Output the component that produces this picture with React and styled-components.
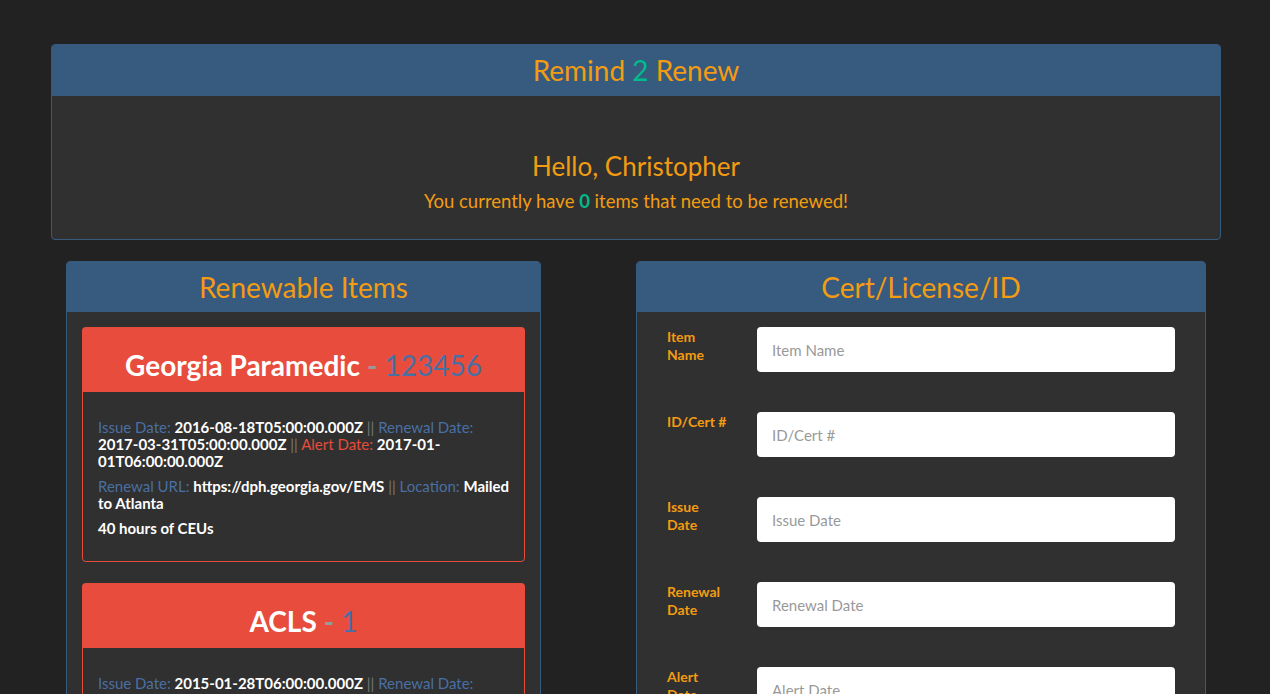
import React from "react";
import styled, { createGlobalStyle } from "styled-components";

const GlobalStyle = createGlobalStyle`
  html, body { margin: 0; padding: 0; background: #222222; }
  body { font-family: Lato, "Liberation Sans", sans-serif; color: #ffffff; }
  * { box-sizing: border-box; }
`;

const Page = styled.div`
  width: 1170px;
  margin: 0 0 0 51px;
  padding-top: 44px;
  padding-bottom: 40px;
`;

const Panel = styled.section`
  background: #303030;
  border: 1px solid #375a7f;
  border-radius: 4px;
  overflow: hidden;
  margin-bottom: ${(p) => p.$mb || "21px"};
`;

const PanelHead = styled.header`
  background: #375a7f;
  height: ${(p) => p.$h || "51px"};
  margin: -1px -1px 0;
  display: flex;
  align-items: center;
  justify-content: center;
`;

const PanelTitle = styled.h1`
  margin: 0;
  font-family: Lato, sans-serif;
  font-weight: 400;
  font-size: ${(p) => p.$size || "28px"};
  color: #f39c12;
  line-height: 1;
`;

const Teal = styled.span`
  color: #00bc8c;
  font-weight: ${(p) => (p.$bold ? 700 : "inherit")};
`;

const Welcome = styled.div`
  padding: 56px 15px 28px;
  text-align: center;
  color: #f39c12;
`;

const Hello = styled.h2`
  margin: 0;
  font-size: 26px;
  font-weight: 400;
  line-height: 29px;
`;

const Subline = styled.p`
  margin: 10px 0 0;
  font-size: 18.5px;
  line-height: 20px;
`;

const Row = styled.div`
  display: flex;
  justify-content: space-between;
  align-items: flex-start;
  padding: 0 15px;
`;

const Column = styled.div`
  width: ${(p) => p.$w};
`;

const PanelBody = styled.div`
  padding: 15px;
`;

const Card = styled.article`
  border-radius: 4px;
  overflow: hidden;
  margin-bottom: 21px;
`;

const CardHead = styled.header`
  background: #e74c3c;
  height: 65px;
  padding-top: 11px;
  display: flex;
  align-items: center;
  justify-content: center;
  font-size: 28px;
  line-height: 1;
`;

const CardName = styled.span`
  font-weight: 700;
  color: #ffffff;
`;

const Dash = styled.span`
  font-weight: 700;
  color: #999999;
  margin: 0 7px;
`;

const CardNum = styled.span`
  color: #4a6fa3;
`;

const CardBody = styled.div`
  border: 1px solid #e74c3c;
  border-top: none;
  border-radius: 0 0 4px 4px;
  padding: 27px 11px 24px 15px;
  font-size: 15px;
  line-height: 17px;
`;

const Para = styled.p`
  margin: 0 0 8px;
  &:last-child { margin-bottom: 0; }
`;

const Lbl = styled.span`
  color: ${(p) => (p.$alert ? "#e74c3c" : "#4a6fa3")};
`;

const Val = styled.span`
  color: #ffffff;
  font-weight: 700;
`;

const Sep = styled.span`
  color: #777777;
`;

const FormBody = styled.div`
  padding: 15px 30px 15px 30px;
  display: flex;
  flex-direction: column;
  gap: 40px;
`;

const FormRow = styled.div`
  display: flex;
  align-items: flex-start;
`;

const FieldLabel = styled.label`
  width: 62px;
  margin-right: 28px;
  padding-top: 1px;
  font-size: 14px;
  font-weight: 700;
  line-height: 18px;
  color: #f39c12;
`;

const Input = styled.input`
  flex: 1;
  height: 45px;
  border: none;
  border-radius: 4px;
  background: #ffffff;
  padding: 0 15px;
  font-family: Lato, sans-serif;
  font-size: 15px;
  color: #333;
  outline: none;
  &::placeholder { color: #999999; }
`;

const items = [
  {
    name: "Georgia Paramedic",
    num: "123456",
    issue: "2016-08-18T05:00:00.000Z",
    renewal: "2017-03-31T05:00:00.000Z",
    alert: "2017-01-01T06:00:00.000Z",
    url: "https://dph.georgia.gov/EMS",
    location: "Mailed to Atlanta",
    notes: "40 hours of CEUs",
  },
  {
    name: "ACLS",
    num: "1",
    issue: "2015-01-28T06:00:00.000Z",
    renewal: "2017-01-28T06:00:00.000Z",
    alert: "2016-12-28T06:00:00.000Z",
    url: "https://www.heart.org",
    location: "Training Center",
    notes: "Recertification class",
  },
];

const fields = ["Item Name", "ID/Cert #", "Issue Date", "Renewal Date", "Alert Date"];

export default function App() {
  return (
    <>
      <GlobalStyle />
      <Page>
        <Panel>
          <PanelHead $h="52px">
            <PanelTitle $size="28px">
              Remind <Teal>2</Teal> Renew
            </PanelTitle>
          </PanelHead>
          <Welcome>
            <Hello>Hello, Christopher</Hello>
            <Subline>
              You currently have <Teal $bold>0</Teal> items that need to be renewed!
            </Subline>
          </Welcome>
        </Panel>

        <Row>
          <Column $w="475px">
            <Panel>
              <PanelHead>
                <PanelTitle>Renewable Items</PanelTitle>
              </PanelHead>
              <PanelBody>
                {items.map((it) => (
                  <Card key={it.name}>
                    <CardHead>
                      <CardName>{it.name}</CardName>
                      <Dash>-</Dash>
                      <CardNum>{it.num}</CardNum>
                    </CardHead>
                    <CardBody>
                      <Para>
                        <Lbl>Issue Date:</Lbl> <Val>{it.issue}</Val> <Sep>||</Sep>{" "}
                        <Lbl>Renewal Date:</Lbl> <Val>{it.renewal}</Val> <Sep>||</Sep>{" "}
                        <Lbl $alert>Alert Date:</Lbl> <Val>{it.alert}</Val>
                      </Para>
                      <Para>
                        <Lbl>Renewal URL:</Lbl> <Val>{it.url}</Val> <Sep>||</Sep>{" "}
                        <Lbl>Location:</Lbl> <Val>{it.location}</Val>
                      </Para>
                      <Para>
                        <Val>{it.notes}</Val>
                      </Para>
                    </CardBody>
                  </Card>
                ))}
              </PanelBody>
            </Panel>
          </Column>
          <Column $w="570px">
            <Panel>
              <PanelHead>
                <PanelTitle>Cert/License/ID</PanelTitle>
              </PanelHead>
              <FormBody>
                {fields.map((f) => (
                  <FormRow key={f}>
                    <FieldLabel>{f}</FieldLabel>
                    <Input placeholder={f} />
                  </FormRow>
                ))}
              </FormBody>
            </Panel>
          </Column>
        </Row>
      </Page>
    </>
  );
}
